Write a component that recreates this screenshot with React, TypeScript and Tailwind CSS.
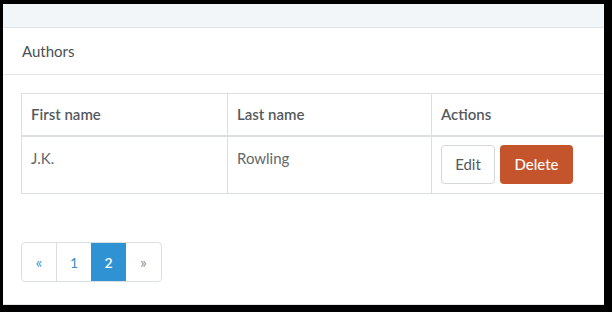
import React from "react";

export default function App() {
  return (
    <div
      className="w-[612px] h-[312px] bg-black pt-[4px] pl-[3px] pr-[8px] pb-[7px] overflow-hidden"
      style={{ fontFamily: "Lato, 'Open Sans', sans-serif" }}
    >
      <div className="w-full h-full bg-white flex flex-col overflow-hidden border-b border-[#e3e6e9]">
        <div className="h-[24px] shrink-0 bg-[#f3f6f9] border-b border-[#dfe4e8]" />
        <div className="h-[47px] shrink-0 flex items-center pl-[19px] border-b border-[#e3e6e9] text-[15px] text-[#4a4f53]">
          Authors
        </div>
        <div className="pl-[18px] pt-[18px]">
          <div className="w-[640px] border-l border-t border-b border-[#dcdfe2] text-[#555a5e] text-[15px]">
            <div className="flex h-[43px] border-b-2 border-[#dcdfe2] font-semibold">
              <div className="w-[206px] border-r border-[#dcdfe2] flex items-center pl-[9px]">First name</div>
              <div className="w-[204px] border-r border-[#dcdfe2] flex items-center pl-[9px]">Last name</div>
              <div className="flex-1 flex items-center pl-[9px]">Actions</div>
            </div>
            <div className="flex h-[56px] text-[#63686c]">
              <div className="w-[206px] border-r border-[#dcdfe2] pl-[9px] pt-[10px] text-[15px]">J.K.</div>
              <div className="w-[204px] border-r border-[#dcdfe2] pl-[9px] pt-[10px] text-[15px]">Rowling</div>
              <div className="flex-1 flex items-start gap-[5px] pl-[9px] pt-[8px]">
                <button className="h-[39px] w-[54px] rounded-[4px] border border-[#d5d8db] bg-white text-[15px] text-[#555a5e]">
                  Edit
                </button>
                <button className="h-[39px] w-[73px] rounded-[4px] bg-[#c4542b] text-[15px] text-white font-medium">
                  Delete
                </button>
              </div>
            </div>
          </div>
          <div className="mt-[48px] flex w-fit h-[40px] border border-[#dcdfe2] rounded-[4px] overflow-hidden text-[14px]">
            <div className="w-[35px] flex items-center justify-center text-[16px] text-[#3b97d3] border-r border-[#dcdfe2]">«</div>
            <div className="w-[34px] flex items-center justify-center text-[#3b8fc8]">1</div>
            <div className="w-[35px] flex items-center justify-center bg-[#2f92d2] text-white font-semibold">2</div>
            <div className="w-[35px] flex items-center justify-center text-[16px] text-[#8a9096]">»</div>
          </div>
        </div>
      </div>
    </div>
  );
}
